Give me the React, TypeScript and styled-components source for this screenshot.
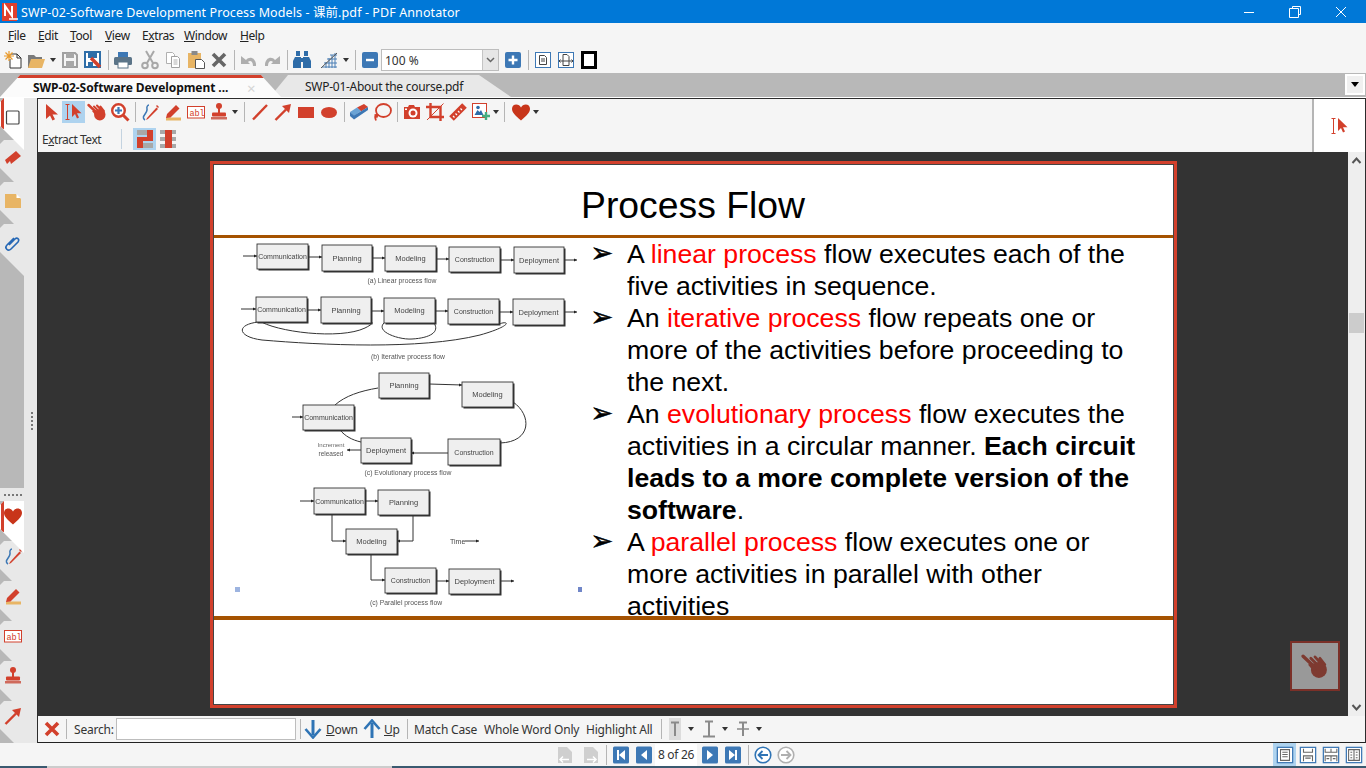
import React from "react";
import styled, { createGlobalStyle } from "styled-components";

const R = "#d2402c";
const B = "#3d78b5";
const UI = `"Noto Sans", "Noto Sans CJK SC", sans-serif`;

const Global = createGlobalStyle`
  html, body { margin: 0; padding: 0; background: #f5f5f5; overflow: hidden; }
  * { box-sizing: border-box; }
`;

const Shell = styled.div`
  width: 1366px; height: 768px; overflow: hidden; display: flex; flex-direction: column;
  background: #f5f5f5; font: 12px ${UI}; color: #222;
`;
const TitleBar = styled.header`
  height: 23px; flex: none; background: #0078d7; color: #fff; display: flex; align-items: center;
`;
const TitleText = styled.span`
  margin-left: 1px; font-size: 12.5px; letter-spacing: 0.1px; white-space: nowrap;
`;
const WinButtons = styled.div`
  margin-left: auto; margin-right: 2px; display: flex;
`;
const WinButton = styled.div`
  width: 46px; height: 23px; display: flex; align-items: center; justify-content: center;
`;
const MenuBar = styled.nav`
  height: 25px; flex: none; display: flex; align-items: center; padding-left: 8px;
`;
const MenuItem = styled.span<{ $w: number }>`
  width: ${p => p.$w}px; flex: none; white-space: nowrap; color: #222; letter-spacing: -0.4px;
`;
const ToolRow = styled.div`
  height: 25px; flex: none; display: flex; align-items: center; padding: 0 0 1px 1px;
`;
const Btn = styled.div<{ $on?: boolean }>`
  width: 23px; height: 22px; flex: none; display: flex; align-items: center; justify-content: center;
  background: ${p => (p.$on ? "#aed3ef" : "transparent")};
`;
const Sep = styled.div<{ $w?: number; $c?: string }>`
  width: ${p => p.$w ?? 7}px; height: 22px; flex: none; position: relative;
  &::after { content: ""; position: absolute; left: 50%; top: 1px; bottom: 1px; width: 1px; background: ${p => p.$c ?? "#b5b5b5"}; }
`;
const Gap = styled.div<{ $w: number }>`
  width: ${p => p.$w}px; flex: none;
`;
const Caret = styled.div<{ $w?: number }>`
  width: ${p => p.$w ?? 11}px; flex: none; display: flex; justify-content: center;
  &::after { content: ""; border: 3.5px solid transparent; border-top: 4px solid #333; border-bottom: 0; }
`;
const ZoomCombo = styled.div`
  width: 118px; height: 22px; flex: none; border: 1px solid #bdbdbd; background: #fff; display: flex; align-items: center;
  padding-left: 3px; position: relative; color: #333; margin-right: 2px;
`;
const ComboArrow = styled.div`
  position: absolute; right: 0; top: 0; bottom: 0; width: 16px; background: #e6e6e6; border-left: 1px solid #c4c4c4;
  display: flex; align-items: center; justify-content: center;
`;
const TabStrip = styled.div`
  height: 24px; flex: none; background: #b8b8b8; display: flex; align-items: flex-end; position: relative; overflow: hidden;
`;
const ActiveTab = styled.div`
  width: 281px; height: 22px; flex: none; position: relative; z-index: 2; background: #fbfbfb; border-top: 3px solid ${R};
  clip-path: polygon(0 100%, 20px 0, 261px 0, 100% 100%);
  display: flex; align-items: center; padding-left: 33px; font-weight: 700; color: #111; white-space: nowrap; letter-spacing: -0.07px;
`;
const TabClose = styled.span`
  position: absolute; left: 247px; top: 0; color: #d5d5d5; font-size: 15px; font-weight: 400;
`;
const OtherTab = styled.div`
  width: 241px; height: 22px; flex: none; margin-left: -11px; background: #e8e8e8;
  clip-path: polygon(0 100%, 18px 0, 209px 0, 100% 100%);
  display: flex; align-items: center; padding-left: 35px; white-space: nowrap; color: #222; letter-spacing: -0.27px;
`;
const TabMenu = styled.div`
  position: absolute; right: 1px; top: 1px; width: 20px; height: 21px; background: #f0f0f0; border: 2px solid #fff;
  display: flex; align-items: center; justify-content: center;
  &::after { content: ""; border: 4px solid transparent; border-top: 5px solid #000; border-bottom: 0; }
`;
const Workspace = styled.div`
  flex: 1; min-height: 0; display: flex; border-top: 1px solid #fff;
`;
const Sidebar = styled.aside`
  width: 37px; flex: none; display: flex; background: #e8e8e8;
`;
const TabColumn = styled.div`
  width: 24px; flex: none; display: flex; flex-direction: column; background: #b8b8b8; overflow: hidden;
`;
const GripColumn = styled.div`
  flex: 1; display: flex; align-items: center; justify-content: center;
`;
const GripV = styled.div`
  width: 2px; height: 18px; background: repeating-linear-gradient(#777 0 2px, transparent 2px 4px); margin-right: -2px;
`;
const SideStack = styled.div<{ $sink?: number }>`
  display: flex; flex-direction: column; margin-bottom: ${p => -(p.$sink ?? 0)}px;
`;
const SideFill = styled.div`
  flex: 1; background: #b8b8b8;
`;
const GripH = styled.div`
  height: 13px; flex: none; background: #e8e8e8; display: flex; align-items: center; justify-content: center;
  &::after { content: ""; width: 18px; height: 2px; background: repeating-linear-gradient(90deg, #777 0 2px, transparent 2px 4px); margin-left: 2px; }
`;
const SideTab = styled.div<{ $active?: boolean; $pull: number; $z: number; $pad: number }>`
  width: 24px; height: 52px; flex: none; margin-top: ${p => -p.$pull}px; position: relative; z-index: ${p => p.$z};
  background: ${p => (p.$active ? "#fff" : "#e8e8e8")};
  clip-path: polygon(4px 0, 100% 0, 100% 100%, 0 28px, 0 4px);
  display: flex; justify-content: center; padding-top: ${p => p.$pad}px; padding-left: ${p => (p.$active ? 2 : 1)}px;
  ${p => p.$active && `&::before { content: ""; position: absolute; left: 1px; top: 0; width: 3px; height: 31px; background: ${R}; border-radius: 0 0 0 3px; }`}
`;
const MainPane = styled.main`
  flex: 1; min-width: 0; display: flex; flex-direction: column; border-left: 1px solid #2c2c2c; border-top: 1px solid #2c2c2c; border-right: 1px solid #2c2c2c;
`;
const AnnotBar = styled.div`
  height: 53px; flex: none; display: flex; background: #f5f5f5;
`;
const AnnotRows = styled.div`
  flex: 1; display: flex; flex-direction: column; padding: 2px 0 0 1px; gap: 5px;
`;
const AnnotRow = styled.div`
  display: flex; align-items: center; height: 22px;
`;
const ExtractLabel = styled.span`
  width: 79px; padding-left: 3px; flex: none; color: #333; letter-spacing: -0.5px; white-space: nowrap;
`;
const ModePanel = styled.div`
  width: 53px; flex: none; background: #fff; border-left: 2px solid #b5b5b5; display: flex; align-items: center; justify-content: center;
`;
const Viewer = styled.div`
  flex: 1; min-height: 0; display: flex;
`;
const Canvas = styled.div`
  flex: 1; position: relative; background: #333; display: flex; justify-content: center; padding-top: 9px;
`;
const HandFloat = styled.div`
  position: absolute; right: 8px; bottom: 25px; width: 50px; height: 50px; background: #999; border: 2px solid #7b3028;
  display: flex; align-items: center; justify-content: center;
`;
const Scrollbar = styled.div`
  width: 17px; flex: none; background: #eee; display: flex; flex-direction: column; align-items: center; justify-content: space-between; position: relative; padding: 4px 0;
`;
const Thumb = styled.div`
  position: absolute; left: 1px; right: 1px; top: 161px; height: 20px; background: #ccc;
`;
const Page = styled.div`
  width: 967px; height: 547px; flex: none; border: 3px solid ${R}; background: #fff; align-self: flex-start;
`;
const PageInner = styled.div`
  height: 100%; border: 1px solid #444; display: flex; flex-direction: column; font-family: "Liberation Sans", Arial, sans-serif; color: #000;
`;
const SlideTitle = styled.h1`
  height: 70px; flex: none; margin: 0; font-size: 37.33px; font-weight: 400; display: flex; align-items: center; justify-content: center; padding: 10px 0 0 0;
`;
const Rule = styled.div`
  height: 3px; flex: none; background: #a55200; position: relative; z-index: 1;
`;
const RuleLow = styled(Rule)`
  height: 4px;
`;
const SlideBody = styled.div`
  height: 378px; flex: none; display: flex; padding-left: 21px;
`;
const Figure = styled.svg`
  width: 350px; height: 374px; flex: none; margin-top: 2px; display: block;
`;
const Bullets = styled.ul`
  list-style: none; margin: 0 0 0 8px; padding: 0; width: 551px; font-size: 26.67px; line-height: 32px;
`;
const Bullet = styled.li`
  display: grid; grid-template-columns: 34.5px 1fr;
`;
const Mark = styled.span`
  font-family: "DejaVu Sans", sans-serif; font-size: 27px; line-height: 30px; margin-left: -2px;
  -webkit-text-stroke: 0.5px #000;
`;
const Hot = styled.span`
  color: #f00;
`;
const SearchBar = styled.div`
  height: 27px; flex: none; display: flex; align-items: center; background: #f5f5f5; border-bottom: 1px solid #222; padding-left: 2px; white-space: nowrap;
`;
const Label = styled.span<{ $w: number; $ml?: number }>`
  width: ${p => p.$w}px; margin-left: ${p => p.$ml ?? 0}px; flex: none; color: #333; letter-spacing: -0.2px;
`;
const SearchInput = styled.div`
  width: 180px; height: 22px; flex: none; background: #fff; border: 1px solid #bdbdbd;
`;
const SlimBtn = styled.div<{ $w?: number; $on?: boolean }>`
  width: ${p => p.$w ?? 18}px; height: 22px; flex: none; display: flex; align-items: center; justify-content: center;
  background: ${p => (p.$on ? "#dcdcdc" : "transparent")};
`;
const StatusBar = styled.footer`
  height: 23px; flex: none; display: flex; align-items: center; padding-left: 553px; background: #f5f5f5;
`;
const PageBox = styled.div`
  width: 42px; height: 22px; flex: none; background: #fff; display: flex; align-items: center; justify-content: center; color: #333; letter-spacing: -0.3px; white-space: nowrap;
`;
const ViewGroup = styled.div`
  margin-left: auto; margin-right: 1px; display: flex;
`;
const ViewBtn = styled.div<{ $on?: boolean }>`
  width: 23px; height: 23px; display: flex; align-items: center; justify-content: center; background: ${p => (p.$on ? "#aed3ef" : "transparent")};
`;
const TaskEdge = styled.div`
  height: 2px; flex: none; background: #3a5a70; display: flex;
`;
const TaskPiece = styled.div`
  margin-left: 47px; width: 345px; background: #ccc;
`;
const Glyph = styled.svg.attrs({ viewBox: "0 0 20 20" })<{ $s?: number }>`
  width: ${p => p.$s ?? 20}px; height: ${p => p.$s ?? 20}px; display: block; flex: none;
`;

/* ------- icons ------- */
const NewIcon = () => (<Glyph><path d="M8 4h6l4 4v10H7V9" fill="#fff" stroke="#333" /><path d="M14 4v4h4" fill="none" stroke="#333" /><path d="M6 1v10M1 6h10M2.5 2.5l7 7M9.5 2.5l-7 7" stroke="#e89a2c" strokeWidth="1.2" /></Glyph>);
const OpenIcon = () => (<Glyph><path d="M2 5h6l2 2h6v3H6L3 18H2z" fill="#7a7a7a" /><path d="M5 9h14l-3 9H2z" fill="#e8b565" /></Glyph>);
const SaveIcon = () => (<Glyph><path d="M3 3h12l2 2v12H3z" fill="none" stroke="#a0a0a0" strokeWidth="2" /><rect x="6" y="3" width="8" height="5" fill="#a8a8a8" /><rect x="6" y="11" width="8" height="6" fill="#a8a8a8" /></Glyph>);
const SaveAsIcon = () => (<Glyph><path d="M2 2h15v15H2z" fill="#fff" stroke="#2f6ea8" strokeWidth="2" /><rect x="5" y="3" width="9" height="5" fill="#2f6ea8" /><rect x="5" y="12" width="5" height="5" fill="#2f6ea8" /><path d="M8 8l9 9" stroke={R} strokeWidth="3.5" /></Glyph>);
const PrintIcon = () => (<Glyph><rect x="5" y="2" width="10" height="5" fill="#3d78b5" /><rect x="1" y="7" width="18" height="8" rx="1.5" fill="#5b7488" /><rect x="5" y="12" width="10" height="6" fill="#fff" stroke="#5b7488" /></Glyph>);
const CutIcon = () => (<Glyph><path d="M6 1l7 12M14 1L7 13" stroke="#a8a8a8" strokeWidth="2" /><circle cx="5" cy="15.5" r="2.8" fill="none" stroke="#a8a8a8" strokeWidth="2" /><circle cx="15" cy="15.5" r="2.8" fill="none" stroke="#a8a8a8" strokeWidth="2" /></Glyph>);
const CopyIcon = () => (<Glyph><path d="M3.5 2.5h6l2 2v9h-8z" fill="#fff" stroke="#b0b0b0" /><path d="M8.5 6.5h6l2 2v9h-8z" fill="#fff" stroke="#a0a0a0" /><path d="M10.5 10h4M10.5 12h4M10.5 14h4" stroke="#b0b0b0" /></Glyph>);
const PasteIcon = () => (<Glyph><rect x="2" y="3" width="13" height="15" fill="#e8b565" /><rect x="5.5" y="1" width="6" height="4" fill="#8a8a8a" /><path d="M9.5 9.5h6l3 3v6h-9z" fill="#fff" stroke="#555" /></Glyph>);
const XIcon = ({ c = "#666" }: { c?: string }) => (<Glyph><path d="M4 4l12 12M16 4L4 16" stroke={c} strokeWidth="3.6" /></Glyph>);
const UndoIcon = ({ flip }: { flip?: boolean }) => (<Glyph><g transform={flip ? "matrix(-1 0 0 1 20 0)" : undefined}><path d="M7 10c3-4 9-3 10 4l0 2-3 0c0-5-3-6-5-4l2 2H2V6z" fill="#aeaeae" /></g></Glyph>);
const BinocIcon = () => (<Glyph><g fill="#2e6ca8"><rect x="4" y="1" width="4" height="5" /><rect x="12" y="1" width="4" height="5" /><path d="M3 7h6v11H1v-7z" /><path d="M11 7h6l2 4v7h-8z" /><rect x="8" y="8" width="4" height="4" /></g></Glyph>);
const GridIcon = () => (<Glyph><path d="M3 17h15M5 13h13M8 9h10M11 5h7M7 18V12M10 18V8M13 18V5M16 18V3" stroke="#4a7fb5" fill="none" /><path d="M2 18L18 3" stroke="#555" /></Glyph>);
const MinusIcon = () => (<Glyph><rect x="2" y="2" width="16" height="16" rx="2" fill={B} /><path d="M6 10h8" stroke="#fff" strokeWidth="2.4" /></Glyph>);
const PlusIcon = () => (<Glyph><rect x="2" y="2" width="16" height="16" rx="2" fill={B} /><path d="M5.5 10h9M10 5.500v9" stroke="#fff" strokeWidth="2.4" /></Glyph>);
const PageIcon = () => (<Glyph><rect x="2.500" y="2.500" width="15" height="15" fill="#fff" stroke={B} /><path d="M6.500 5.500h5l2 2v7h-7zM8 9h4M8 11h4" fill="none" stroke="#444" /></Glyph>);
const WidthIcon = () => (<Glyph><rect x="2.500" y="2.500" width="15" height="15" fill="#fff" stroke={B} /><path d="M7 4.500h4l2 2v9H7zM3.500 11h13M4.500 9.500L3 11l1.500 1.500M15.500 9.500L17 11l-1.500 1.500" fill="none" stroke="#444" /></Glyph>);
const FullIcon = () => (<Glyph><rect x="3.500" y="2.500" width="13" height="15" fill="#fff" stroke="#000" strokeWidth="3" /></Glyph>);

const CursorIcon = () => (<Glyph><path d="M5 2v15l4-3.500 2.500 5 2.500-1.200-2.500-4.800H17z" fill={R} /></Glyph>);
const TextCursorIcon = ({ s }: { s?: number }) => (<Glyph $s={s}><path d="M1.500 2.500h4M3.500 2.500v15M1.500 17.500h4" stroke={R} fill="none" /><path d="M8 2v13l3-3 2 4.500 2-1-2-4.200h4.500z" fill={R} /></Glyph>);
const HandIcon = ({ c = R, s }: { c?: string; s?: number }) => (
  <Glyph $s={s}>
    <path d="M1.500 3l8 7.500" stroke={c} strokeWidth="2.400" strokeLinecap="round" />
    <path d="M7 4.500l5 5M10 3.500l5 5.500M13.500 4.500l3.500 4.500" stroke={c} strokeWidth="2" strokeLinecap="round" />
    <circle cx="12.800" cy="12.800" r="5.700" fill={c} />
    <path d="M5 9l4-1 2 5-2 1z" fill={c} />
  </Glyph>
);
const ZoomIcon = () => (<Glyph><circle cx="8.500" cy="8.500" r="6.300" fill="#fff" stroke={R} strokeWidth="2.400" /><path d="M5 8.500h7M8.500 5v7" stroke={B} strokeWidth="2.200" /><path d="M13 13l5.500 5.500" stroke={R} strokeWidth="3" /></Glyph>);
const QuillIcon = () => (<Glyph><path d="M5 18c-5-3 3-7 2-11-.5-2 .5-4 2-4" fill="none" stroke={B} strokeWidth="1.500" /><path d="M7 16l-1 2 2-1 10-10-1.500-1.500z" fill={R} /><path d="M17 3l2 2-1 1-2-2z" fill={R} /></Glyph>);
const PenIcon = () => (<Glyph><rect x="3" y="15.500" width="15" height="3" fill="#e8b565" /><path d="M3 16l1-4 9-9 3.500 3.500-9 9z" fill={R} /></Glyph>);
const AblIcon = () => (<Glyph><rect x="1.500" y="4.500" width="17" height="11.500" fill="#fff" stroke={R} /><text x="3.400" y="13.500" fontFamily="'Liberation Mono', monospace" fontSize="8.500" fill={R}>abl</text></Glyph>);
const StampIcon = () => (<Glyph><circle cx="10" cy="4" r="3" fill={R} /><rect x="9" y="6" width="2" height="5" fill={R} /><rect x="3" y="10.500" width="14" height="4" rx="1" fill={R} /><rect x="2" y="15" width="16" height="2.500" fill="#cf6a5c" /></Glyph>);
const LineIcon = () => (<Glyph><path d="M3 17.500L17 3" stroke={R} strokeWidth="2.400" /></Glyph>);
const ArrowIcon = () => (<Glyph><path d="M2.500 18L13 7.500" stroke={R} strokeWidth="2.400" /><path d="M18 2l-2 9-7-7z" fill={R} /></Glyph>);
const RectIcon = () => (<Glyph><rect x="2" y="5" width="16" height="11" fill={R} /></Glyph>);
const EllipseIcon = () => (<Glyph><ellipse cx="10" cy="10.500" rx="8" ry="5.500" fill={R} /></Glyph>);
const EraserIcon = () => (<Glyph><path d="M8 5.500l7-3.500 4 3-7 4.500z" fill={R} /><path d="M1 10l7-4.500 4 3.500-7 5z" fill="#6aa3d5" /><path d="M1 10v4l4 3.500 0-4z" fill={B} /><path d="M5 13.500l14-8.500v3l-14 9.500z" fill={B} /></Glyph>);
const LassoIcon = () => (<Glyph><ellipse cx="11.500" cy="8.500" rx="7.500" ry="6.500" fill="none" stroke={R} strokeWidth="1.800" /><path d="M5 12c-2 1-2.500 3-1 6.500" fill="none" stroke={R} strokeWidth="1.800" /><path d="M2 12.500l5 0-2 4z" fill={R} /></Glyph>);
const CameraIcon = () => (<Glyph><path d="M2 5h4l1-2h5l1 2h5v12H2z" fill={R} /><circle cx="11" cy="11" r="4.500" fill="#fff" /><circle cx="11" cy="11" r="2.500" fill={R} /><rect x="3" y="6.500" width="2" height="1.500" fill="#fff" /></Glyph>);
const CropIcon = () => (<Glyph><path d="M5.500 1v14H19M1 5h14.500v14" fill="none" stroke={R} strokeWidth="2.400" /><path d="M2 18L18.500 1.500" stroke={R} /></Glyph>);
const RulerIcon = () => (<Glyph><path d="M3.500 16.500l13-13" stroke={R} strokeWidth="6.500" /><path d="M5 14l1.500 1.500M7.500 11.500l1.500 1.500M10 9l1.500 1.500M12.500 6.500l1.500 1.500" stroke="#fff" strokeWidth="1.200" /></Glyph>);
const ImageAddIcon = () => (<Glyph><rect x="1.500" y="1.500" width="14" height="14" fill="#fff" stroke={R} /><path d="M3.500 13l3-5 2 2 1.500-2 2.500 5z" fill="#2e6ca8" /><circle cx="7" cy="5.500" r="1.800" fill="#2e6ca8" /><path d="M15 10v8M11 14h8" stroke="#45ad7f" strokeWidth="2.400" /></Glyph>);
const HeartIcon = () => (<Glyph><path d="M10 18.500C3.500 13 1 10 1 6.800 1 4 3 2.500 5.200 2.500 7.400 2.500 9 3.800 10 5.500 11 3.800 12.600 2.500 14.800 2.500 17 2.500 19 4 19 6.800 19 10 16.500 13 10 18.500z" fill="#c8351a" /></Glyph>);
const ExtractA = () => (
  <Glyph>
    <rect x="2" y="1" width="11" height="5" fill="#a8a8a8" />
    <rect x="8" y="14" width="10" height="5" fill="#a8a8a8" />
    <path d="M12 1h6v11H8v7H2V8h10z" fill={R} />
  </Glyph>
);
const ExtractB = () => (<Glyph><g fill="#a8a8a8"><rect x="2" y="1" width="16" height="4" /><rect x="2" y="8" width="16" height="4" /><rect x="2" y="15" width="16" height="4" /></g><rect x="7" y="1" width="7" height="18" fill={R} /></Glyph>);
const SquareIcon = () => (<Glyph><rect x="3.500" y="4" width="12.500" height="13" rx="1" fill="#fff" stroke="#444" strokeWidth="1.200" /></Glyph>);
const BookmarkIcon = () => (<Glyph><path d="M2 11L13 2l5 5-10 8-1-3-3 3z" fill={R} /></Glyph>);
const NoteIcon = () => (<Glyph><path d="M2 3h11l5 5v9H2z" fill="#e8b565" /><path d="M13.500 3l4 4h-4z" fill="#fff" /></Glyph>);
const ClipIcon = () => (<Glyph><path d="M6 11l6-6c2-2 5 0 3 3l-7 7c-3 3-7-1-4-4l7-7" fill="none" stroke="#2668b5" strokeWidth="1.600" /></Glyph>);
const DownIcon = ({ up }: { up?: boolean }) => (<Glyph><g transform={up ? "matrix(1 0 0 -1 0 20)" : undefined}><path d="M10 1v15" stroke="#2f74b5" strokeWidth="3" /><path d="M2.500 10L10 18.500 17.500 10" fill="none" stroke="#2f74b5" strokeWidth="2.600" /></g></Glyph>);
const TIcon = ({ v }: { v: 0 | 1 | 2 }) => (<Glyph><path d={v === 0 ? "M6 3.500h8" : v === 1 ? "M6 2.500h8" : "M6 3.500h8"} stroke="#8a8a8a" strokeWidth="2" /><path d="M10 3v14" stroke="#8a8a8a" strokeWidth="2" />{v === 1 && <path d="M4 17.500h12" stroke="#8a8a8a" strokeWidth="2" />}{v === 2 && <path d="M4 10h12" stroke="#8a8a8a" strokeWidth="1.500" />}</Glyph>);
const NavIcon = ({ d }: { d: string }) => (<Glyph><rect x="2" y="1.500" width="16" height="17" rx="1.500" fill={B} /><path d={d} fill="#fff" /></Glyph>);
const CircleNav = ({ c, flip }: { c: string; flip?: boolean }) => (<Glyph><g transform={flip ? "matrix(-1 0 0 1 20 0)" : undefined}><circle cx="10" cy="10" r="7.800" fill="#fff" stroke={c} strokeWidth="1.600" /><path d="M15 10H6M9.500 6L5.500 10l4 4" fill="none" stroke={c} strokeWidth="1.800" /></g></Glyph>);
const PageNav = ({ flip }: { flip?: boolean }) => (<Glyph><path d="M3 2h9l5 5v11H3z" fill="#cfcfcf" /><g transform={flip ? "matrix(-1 0 0 1 20 0)" : undefined}><path d="M14 14.500H5M8 11.500L5 14.500l3 3" fill="none" stroke="#fff" strokeWidth="1.500" /></g></Glyph>);
const ViewIcon = ({ k }: { k: number }) => (
  <Glyph $s={18}>
    <rect x="1.500" y="1.500" width="17" height="17" fill="#fff" stroke={B} strokeWidth="1.400" />
    {k === 0 && <path d="M5 4h10v12H5zM7 7h6M7 9.500h6M7 12h6" fill="none" stroke="#666" strokeWidth="1.200" />}
    {k === 1 && <path d="M5 3v4h10V3M5 17v-6h10v6M7 13.500h6" fill="none" stroke="#666" strokeWidth="1.200" />}
    {k === 2 && <path d="M3.500 3v4h13V3M3.500 17v-6h13v6M10 3v4M10 11v6M5 14h3M12 14h3" fill="none" stroke="#666" strokeWidth="1.200" />}
    {k === 3 && <path d="M4 4h12v12H4zM10 4v12M6 7h2M6 10h2M6 13h2M12 7h2M12 10h2M12 13h2" fill="none" stroke="#666" strokeWidth="1.200" />}
  </Glyph>
);
const Logo = () => (
  <Glyph $s={20}>
    <rect x="2" y="1" width="15" height="18" fill="#e0402e" />
    <path d="M5 14V4l7 10V4" fill="none" stroke="#fff" strokeWidth="2" />
    <path d="M9 17h9" stroke="#fff" strokeWidth="1.500" />
  </Glyph>
);

/* ------- diagram ------- */
type BoxT = [number, number, number, number, string];
const boxes: BoxT[] = [
  [257, 244, 51, 25, "Communication"], [322, 245, 50, 26, "Planning"], [385, 246, 51, 25, "Modeling"], [449, 247, 51, 25, "Construction"], [514, 247, 50, 26, "Deployment"],
  [256, 297, 51, 25, "Communication"], [321, 297, 50, 26, "Planning"], [384, 298, 51, 25, "Modeling"], [448, 299, 51, 25, "Construction"], [513, 299, 51, 26, "Deployment"],
  [379, 373, 50, 25, "Planning"], [462, 382, 51, 25, "Modeling"], [303, 405, 51, 25, "Communication"], [361, 438, 50, 25, "Deployment"], [448, 439, 52, 26, "Construction"],
  [314, 488, 51, 26, "Communication"], [378, 490, 51, 25, "Planning"], [346, 529, 51, 25, "Modeling"], [385, 568, 51, 25, "Construction"], [449, 569, 51, 25, "Deployment"],
];
const arrows: [number, number, number, number][] = [
  [243, 256, 257, 256], [308, 257, 322, 257], [372, 258, 385, 258], [436, 259, 449, 259], [500, 260, 514, 260], [564, 260, 577, 260],
  [241, 309, 256, 309], [307, 310, 321, 310], [371, 311, 384, 311], [435, 311, 448, 311], [499, 312, 513, 312], [564, 312, 577, 312],
  [429, 384, 462, 385], [448, 453, 411, 453], [361, 450, 347, 450], [292, 417, 303, 417],
  [300, 501, 314, 501], [365, 501, 378, 501], [332, 541, 346, 541], [413, 541, 397, 541], [371, 580, 385, 580], [436, 581, 449, 581], [500, 581, 514, 581], [465, 541, 479, 541],
];
const curves = [
  "M258 322C235 325 238 337 262 340C320 345 420 350 480 335C512 326 510 320 499 324",
  "M258 320C275 332 340 340 365 328C375 323 372 322 371 322",
  "M384 323C375 332 400 340 412 339C430 338 440 332 434 323",
  "M335 405C345 396 360 391 378 388",
  "M513 402C532 415 532 442 500 443",
  "M340 430C345 436 352 440 361 442",
  "M332 514V541M413 515V541M371 554V580",
];
const captions: [number, number, string][] = [
  [402, 283, "(a) Linear process flow"], [408, 359, "(b) Iterative process flow"], [408, 475, "(c) Evolutionary process flow"], [406, 605, "(c) Parallel process flow"],
];
const Diagram = () => (
  <Figure viewBox="235 240 350 374">
    <defs><filter id="soft" x="-5%" y="-5%" width="110%" height="110%"><feGaussianBlur stdDeviation="0.45" /></filter></defs>
    <g filter="url(#soft)" fontFamily="'Liberation Sans', sans-serif" fill="#555">
      {curves.map(d => <path key={d} d={d} fill="none" stroke="#333" strokeWidth="1" />)}
      {arrows.map(([a, b, c, d], i) => {
        const s = Math.sign(c - a);
        return (
          <g key={i}>
            <line x1={a} y1={b} x2={c} y2={d} stroke="#333" strokeWidth="1" />
            <path d={`M${c} ${d}l${-3 * s} -1.500v3z`} fill="#222" />
          </g>
        );
      })}
      {boxes.map(([x, y, w, h, t]) => (
        <g key={x + t}>
          <rect x={x + 1.5} y={y + 1.5} width={w} height={h} fill="#333" />
          <rect x={x} y={y} width={w} height={h} fill="#efefef" stroke="#333" strokeWidth="0.9" />
          <text x={x + w / 2} y={y + h / 2 + 2.500} textAnchor="middle" fontSize={t.length > 11 ? 7 : 7.500} fill="#444">{t}</text>
        </g>
      ))}
      {captions.map(([x, y, t]) => <text key={t} x={x} y={y} textAnchor="middle" fontSize="6.800" fill="#555">{t}</text>)}
      <text x="331" y="447" textAnchor="middle" fontSize="6" fill="#666">Increment</text>
      <text x="331" y="455.500" textAnchor="middle" fontSize="6.500" fill="#555">released</text>
      <text x="450" y="544" fontSize="7" fill="#444">Time</text>
      <rect x="235" y="587" width="5" height="5" fill="#9db4e0" />
      <rect x="578" y="587" width="4" height="5" fill="#6f86c8" />
    </g>
  </Figure>
);

const Mn = styled.u``;

export default function App() {
  return (
    <Shell>
      <Global />
      <TitleBar>
        <Logo />
        <TitleText>SWP-02-Software Development Process Models - 课前.pdf - PDF Annotator</TitleText>
        <WinButtons>
          <WinButton><svg width="12" height="12"><path d="M1 6.500h10" stroke="#fff" /></svg></WinButton>
          <WinButton><svg width="12" height="12"><path d="M3.500 2.500V.5h8v8h-2M.5 2.500h9v9h-9z" fill="none" stroke="#fff" /></svg></WinButton>
          <WinButton><svg width="12" height="12"><path d="M1 1l10 10M11 1L1 11" stroke="#fff" /></svg></WinButton>
        </WinButtons>
      </TitleBar>
      <MenuBar>
        <MenuItem $w={30}><Mn>F</Mn>ile</MenuItem>
        <MenuItem $w={32}><Mn>E</Mn>dit</MenuItem>
        <MenuItem $w={35}><Mn>T</Mn>ool</MenuItem>
        <MenuItem $w={37}><Mn>V</Mn>iew</MenuItem>
        <MenuItem $w={42}>E<Mn>x</Mn>tras</MenuItem>
        <MenuItem $w={56}><Mn>W</Mn>indow</MenuItem>
        <MenuItem $w={40}><Mn>H</Mn>elp</MenuItem>
      </MenuBar>
      <ToolRow>
        <Btn><NewIcon /></Btn><Btn><OpenIcon /></Btn><Caret /><Btn><SaveIcon /></Btn><Btn><SaveAsIcon /></Btn>
        <Sep /><Btn><PrintIcon /></Btn><Gap $w={4} /><Btn><CutIcon /></Btn><Btn><CopyIcon /></Btn><Btn><PasteIcon /></Btn><Btn><XIcon /></Btn>
        <Sep /><Btn><UndoIcon /></Btn><Btn><UndoIcon flip /></Btn><Sep /><Btn><BinocIcon /></Btn><Gap $w={4} /><Btn><GridIcon /></Btn><Caret />
        <Sep /><Btn><MinusIcon /></Btn>
        <ZoomCombo>100 %<ComboArrow><svg width="9" height="6"><path d="M1 1l3.500 3.500L8 1" fill="none" stroke="#666" strokeWidth="1.500" /></svg></ComboArrow></ZoomCombo>
        <Btn><PlusIcon /></Btn><Sep /><Btn><PageIcon /></Btn><Btn><WidthIcon /></Btn><Btn><FullIcon /></Btn>
      </ToolRow>
      <TabStrip>
        <ActiveTab>SWP-02-Software Development ...<TabClose>×</TabClose></ActiveTab>
        <OtherTab>SWP-01-About the course.pdf</OtherTab>
        <TabMenu />
      </TabStrip>
      <Workspace>
        <Sidebar>
          <TabColumn>
            <SideStack>
              <SideTab $active $pull={0} $z={9} $pad={9}><SquareIcon /></SideTab>
              <SideTab $pull={10} $z={1} $pad={9}><BookmarkIcon /></SideTab>
              <SideTab $pull={10} $z={2} $pad={9}><NoteIcon /></SideTab>
              <SideTab $pull={10} $z={3} $pad={10}><ClipIcon /></SideTab>
            </SideStack>
            <SideFill />
            <GripH />
            <SideStack $sink={10}>
              <SideTab $active $pull={0} $z={9} $pad={5}><HeartIcon /></SideTab>
              <SideTab $pull={12} $z={1} $pad={5}><QuillIcon /></SideTab>
              <SideTab $pull={12} $z={2} $pad={5}><PenIcon /></SideTab>
              <SideTab $pull={12} $z={3} $pad={5}><AblIcon /></SideTab>
              <SideTab $pull={12} $z={4} $pad={5}><StampIcon /></SideTab>
              <SideTab $pull={12} $z={5} $pad={5}><ArrowIcon /></SideTab>
            </SideStack>
          </TabColumn>
          <GripColumn><GripV /></GripColumn>
        </Sidebar>
        <MainPane>
          <AnnotBar>
            <AnnotRows>
              <AnnotRow>
                <Btn><CursorIcon /></Btn><Btn $on><TextCursorIcon /></Btn><Btn><HandIcon /></Btn><Btn><ZoomIcon /></Btn>
                <Sep /><Btn><QuillIcon /></Btn><Btn><PenIcon /></Btn><Btn><AblIcon /></Btn><Btn><StampIcon /></Btn><Caret $w={10} />
                <Sep $w={8} /><Btn><LineIcon /></Btn><Btn><ArrowIcon /></Btn><Btn><RectIcon /></Btn><Btn><EllipseIcon /></Btn>
                <Sep /><Btn><EraserIcon /></Btn><Btn><LassoIcon /></Btn>
                <Sep /><Btn><CameraIcon /></Btn><Btn><CropIcon /></Btn><Btn><RulerIcon /></Btn><Btn><ImageAddIcon /></Btn><Caret $w={7} />
                <Sep $w={10} /><Btn><HeartIcon /></Btn><Caret $w={7} />
              </AnnotRow>
              <AnnotRow>
                <ExtractLabel>E<Mn>x</Mn>tract Text</ExtractLabel>
                <Sep $w={5} $c="#c4d3e0" />
                <Gap $w={10} />
                <Btn $on><ExtractA /></Btn><Btn><ExtractB /></Btn>
              </AnnotRow>
            </AnnotRows>
            <ModePanel><TextCursorIcon /></ModePanel>
          </AnnotBar>
          <Viewer>
            <Canvas>
              <Page>
                <PageInner>
                  <SlideTitle>Process Flow</SlideTitle>
                  <Rule />
                  <SlideBody>
                    <Diagram />
                    <Bullets>
                      <Bullet><Mark>➢</Mark><span>A <Hot>linear process</Hot> flow executes each of the five activities in sequence.</span></Bullet>
                      <Bullet><Mark>➢</Mark><span>An <Hot>iterative process</Hot> flow repeats one or more of the activities before proceeding to the next.</span></Bullet>
                      <Bullet><Mark>➢</Mark><span>An <Hot>evolutionary process</Hot> flow executes the activities in a circular manner. <b>Each circuit leads to a more complete version of the software</b>.</span></Bullet>
                      <Bullet><Mark>➢</Mark><span>A <Hot>parallel process</Hot> flow executes one or more activities in parallel with other activities</span></Bullet>
                    </Bullets>
                  </SlideBody>
                  <RuleLow />
                </PageInner>
              </Page>
              <HandFloat><HandIcon c="#7e3a30" s={28} /></HandFloat>
            </Canvas>
            <Scrollbar>
              <svg width="11" height="9"><path d="M1.500 7L5.500 2.500 9.500 7" fill="none" stroke="#555" strokeWidth="2" /></svg>
              <Thumb />
              <svg width="11" height="9"><path d="M1.500 2L5.500 6.500 9.500 2" fill="none" stroke="#555" strokeWidth="2" /></svg>
            </Scrollbar>
          </Viewer>
          <SearchBar>
            <Btn><XIcon c={R} /></Btn>
            <Sep $w={6} />
            <Label $w={42} $ml={5}>Search:</Label>
            <SearchInput />
            <Sep $w={8} />
            <SlimBtn><DownIcon /></SlimBtn>
            <Label $w={37} $ml={4}><Mn>D</Mn>own</Label>
            <SlimBtn><DownIcon up /></SlimBtn>
            <Label $w={20} $ml={3}><Mn>U</Mn>p</Label>
            <Sep $w={6} />
            <Label $w={70} $ml={4}>Match Case</Label>
            <Label $w={102}>Whole Word Only</Label>
            <Label $w={71}>Highlight All</Label>
            <Sep $w={8} />
            <Gap $w={4} />
            <SlimBtn $w={12} $on><TIcon v={0} /></SlimBtn><Gap $w={3} /><Caret $w={14} />
            <Gap $w={2} />
            <SlimBtn><TIcon v={1} /></SlimBtn><Caret $w={14} />
            <Gap $w={2} />
            <SlimBtn><TIcon v={2} /></SlimBtn><Caret $w={14} />
          </SearchBar>
        </MainPane>
      </Workspace>
      <StatusBar>
        <Btn><PageNav /></Btn><Gap $w={3} /><Btn><PageNav flip /></Btn>
        <Sep $w={7} />
        <Btn><NavIcon d="M6 5h2v10H6zM14 5v10L8 10z" /></Btn><Btn><NavIcon d="M13 5v10L7 10z" /></Btn>
        <PageBox>8 of 26</PageBox><Gap $w={1} />
        <Btn><NavIcon d="M7 5v10l6-5z" /></Btn><Btn><NavIcon d="M6 5v10l6-5zM12 5h2v10h-2z" /></Btn>
        <Sep />
        <Btn><CircleNav c="#2f74b5" /></Btn><Btn><CircleNav c="#b0b0b0" flip /></Btn>
        <ViewGroup>
          <ViewBtn $on><ViewIcon k={0} /></ViewBtn><ViewBtn><ViewIcon k={1} /></ViewBtn><ViewBtn><ViewIcon k={2} /></ViewBtn><ViewBtn><ViewIcon k={3} /></ViewBtn>
        </ViewGroup>
      </StatusBar>
      <TaskEdge><TaskPiece /></TaskEdge>
    </Shell>
  );
}
